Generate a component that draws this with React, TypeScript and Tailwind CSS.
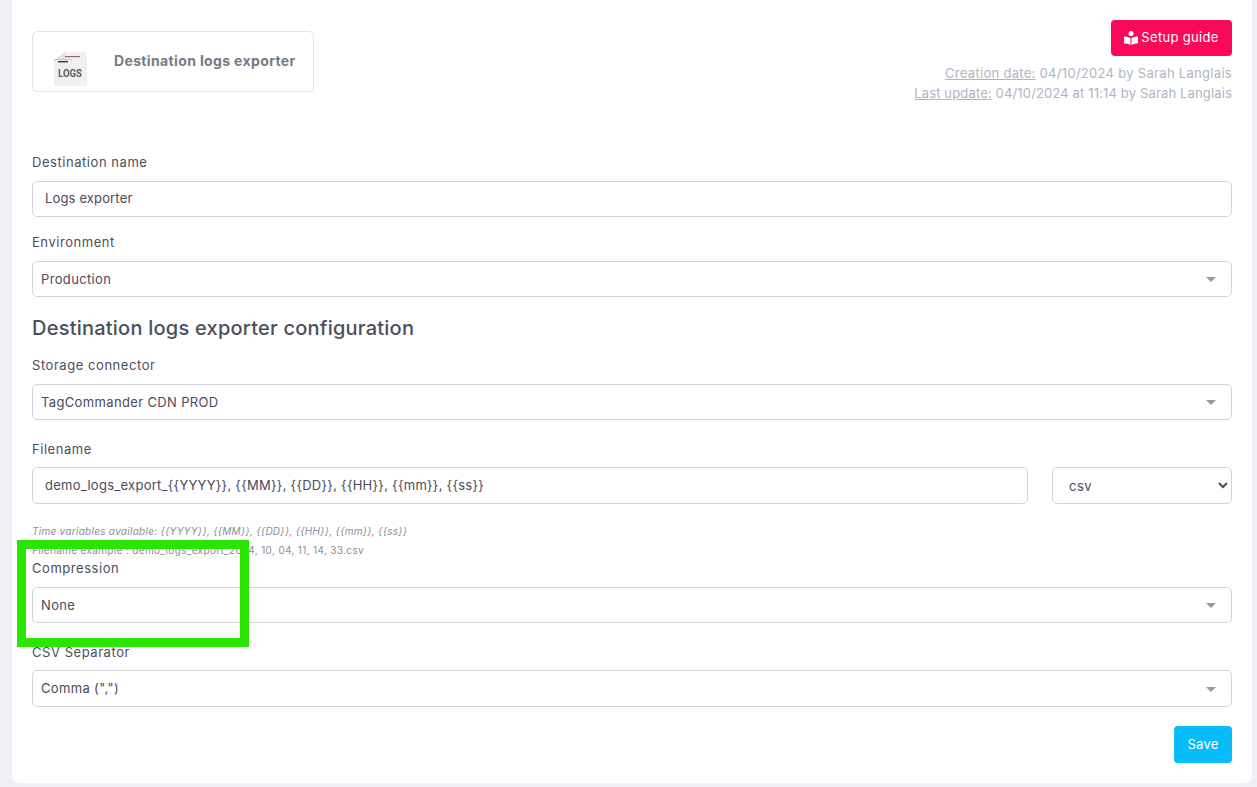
const font = "font-['Inter',sans-serif]";

const Label = ({ children, className = "" }: { children: string; className?: string }) => (
  <div className={`h-[20px] leading-[20px] text-[13px] tracking-[0.55px] text-[#4b4f5c] ${className}`}>{children}</div>
);

const Select2 = ({ value, className = "" }: { value: string; className?: string }) => (
  <div className={`flex h-[36px] items-center justify-between rounded-[5px] border border-[#d2d4dc] pl-[8px] pr-[15px] ${className}`}>
    <span className="pt-[1px] text-[13px] tracking-[0.35px] text-[#4d4a5c]">{value}</span>
    <span className="mt-[1px] h-0 w-0 border-x-[5px] border-t-[5px] border-x-transparent border-t-[#999999]" />
  </div>
);

const LogsIcon = () => (
  <svg width="34" height="34" viewBox="0 0 34 34" className="mt-[20px] shrink-0 self-start">
    <path d="M12 0h20a2 2 0 0 1 2 2v30a2 2 0 0 1-2 2H3a2 2 0 0 1-2-2V8z" fill="#f0f0f1" />
    <path d="M1 8l11-8v7z" fill="#e2e2e4" />
    <rect x="1" y="7" width="18" height="1" fill="#c9c9cc" />
    <rect x="5" y="9" width="10" height="1.4" fill="#34324a" />
    <rect x="12" y="4" width="15" height="1.2" fill="#a0607e" />
    <text x="17" y="24.5" textAnchor="middle" fontSize="11" fontWeight="700" fill="#5f5f64" fontFamily="Roboto, sans-serif" textLength="24" lengthAdjust="spacingAndGlyphs">LOGS</text>
  </svg>
);

const BookIcon = () => (
  <svg width="14" height="14" viewBox="0 0 14 14" fill="#ffffff" className="shrink-0">
    <circle cx="7" cy="2.6" r="2.5" />
    <path d="M0 5.4c2.2 0 4.6.5 6.5 1.7V14C4.6 12.9 2.2 12.4 0 12.3zM14 5.4c-2.2 0-4.6.5-6.5 1.7V14c1.9-1.1 4.3-1.6 6.5-1.7z" />
  </svg>
);

export default function App() {
  return (
    <div className={`relative h-[787px] w-[1257px] overflow-hidden bg-[#eef0f6] ${font}`}>
      <div className="ml-[12px] mt-[-4px] h-[787px] w-[1240px] rounded-[6px] bg-white px-[20px] pt-[24px]">
        <div className="flex h-[118px] items-start justify-between">
          <div className="mt-[11px] flex h-[61px] w-[282px] items-center rounded-[5px] border border-[#e4e5ea] pl-[20px]">
            <LogsIcon />
            <span className="ml-[27px] mt-[-3px] text-[14px] font-bold tracking-[0.36px] text-[#777a89]">Destination logs exporter</span>
          </div>
          <div className="flex flex-col items-end">
            <button className="flex h-[36px] w-[121px] items-center justify-center gap-[3px] rounded-[4px] bg-[#f90a58] text-[13px] tracking-[0.32px] text-white">
              <BookIcon />
              Setup guide
            </button>
            <div className="mt-[7px] text-[13px] leading-[20px] tracking-[0.3px] text-[#b0b4c2]">
              <span className="underline">Creation date:</span> 04/10/2024 by Sarah Langlais
            </div>
            <div className="text-[13px] leading-[20px] tracking-[0.15px] text-[#b0b4c2]">
              <span className="underline">Last update:</span> 04/10/2024 at 11:14 by Sarah Langlais
            </div>
          </div>
        </div>

        <Label className="mt-[14px]">Destination name</Label>
        <div className="mt-[9px] flex h-[36px] items-center rounded-[5px] border border-[#d2d4dc] pl-[12px] text-[13px] tracking-[0.15px] text-[#4d4a5c]">
          Logs exporter
        </div>

        <Label className="mt-[15px]">Environment</Label>
        <Select2 value="Production" className="mt-[9px]" />

        <h2 className="mt-[17px] h-[28px] text-[20px] leading-[28px] font-medium tracking-[0.23px] text-[#4b4f5c]">
          Destination logs exporter configuration
        </h2>

        <Label className="mt-[13px]">Storage connector</Label>
        <Select2 value="TagCommander CDN PROD" className="mt-[9px]" />

        <Label className="mt-[19px]">Filename</Label>
        <div className="mt-[8px] flex h-[37px] gap-[24px]">
          <div className="flex flex-1 items-center rounded-[5px] border border-[#d2d4dc] pl-[12px] text-[13px] tracking-[0.27px] text-[#4d4a5c]">
            {"demo_logs_export_{{YYYY}}, {{MM}}, {{DD}}, {{HH}}, {{mm}}, {{ss}}"}
          </div>
          <select className="h-[37px] w-[180px] rounded-[5px] border border-[#d2d4dc] bg-white pl-[12px] pr-[2px] text-[13px] tracking-[0.5px] text-[#4d4a5c]">
            <option>csv</option>
          </select>
        </div>

        <div className="mt-[18px] h-[19px] text-[10px] leading-[19px] italic tracking-[0.28px] text-[#8a8d99]">
          {"Time variables available: {{YYYY}}, {{MM}}, {{DD}}, {{HH}}, {{mm}}, {{ss}}"}
        </div>
        <div className="h-[19px] text-[10px] leading-[19px] tracking-[0.34px] text-[#8a8d99]">
          Filename example : demo_logs_export_2024, 10, 04, 11, 14, 33.csv
        </div>

        <Label className="mt-[-2px]">Compression</Label>
        <Select2 value="None" className="mt-[9px]" />

        <Label className="mt-[19px]">CSV Separator</Label>
        <Select2 value={'Comma (",")'} className="mt-[8px] h-[37px]" />

        <div className="mt-[19px] flex justify-end">
          <button className="h-[37px] w-[58px] rounded-[4px] bg-[#08bcf8] text-[13px] tracking-[0.2px] text-white">Save</button>
        </div>
      </div>

      <div className="absolute left-[17px] top-[540px] h-[107px] w-[232px] border-[9px] border-[#2ae500]" />
    </div>
  );
}
